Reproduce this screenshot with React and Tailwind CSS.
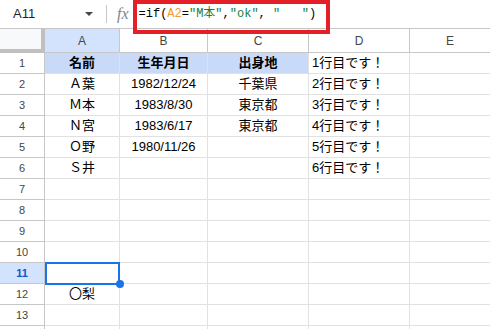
import React from "react";

const FONT = { fontFamily: '"Liberation Sans", Arial, "Noto Sans CJK JP", sans-serif' };

const data = [
  ["名前", "生年月日", "出身地", "1行目です！"],
  ["Ａ葉", "1982/12/24", "千葉県", "2行目です！"],
  ["Ｍ本", "1983/8/30", "東京都", "3行目です！"],
  ["Ｎ宮", "1983/6/17", "東京都", "4行目です！"],
  ["Ｏ野", "1980/11/26", "", "5行目です！"],
  ["Ｓ井", "", "", "6行目です！"],
  ["", "", "", ""],
  ["", "", "", ""],
  ["", "", "", ""],
  ["", "", "", ""],
  ["", "", "", ""],
  ["〇梨", "", "", ""],
  ["", "", "", ""],
  ["", "", "", ""],
];

export default function App() {
  return (
    <div className="relative w-[490px] h-[329px] overflow-hidden bg-white text-black" style={FONT}>
      {/* toolbar */}
      <div className="flex items-center h-[29px] border-b border-[#c7c7c7] bg-white">
        <div className="w-[106px] flex items-center pl-[13px] pr-[13px] justify-between">
          <span className="text-[13px] text-[#1f1f1f]">A11</span>
          <svg width="8" height="4" viewBox="0 0 8 4">
            <path d="M0 0 L8 0 L4 4 Z" fill="#444746" />
          </svg>
        </div>
        <div className="w-px h-[18px] bg-[#c7c7c7]" />
        <span className="ml-[10px] text-[16px] italic text-[#80868b]" style={{ fontFamily: '"Liberation Serif", serif' }}>
          fx
        </span>
        <div className="ml-[10px] text-[12px] whitespace-pre" style={{ fontFamily: '"Liberation Mono", "Noto Sans CJK JP", monospace' }}>
          <span>=if(</span>
          <span className="text-[#f29b30]">A2</span>
          <span>=</span>
          <span className="text-[#188038]">"M本"</span>
          <span>,</span>
          <span className="text-[#188038]">"ok"</span>
          <span>, </span>
          <span className="text-[#188038]">"   "</span>
          <span>)</span>
        </div>
      </div>

      {/* column header row */}
      <div className="flex h-[24px] text-[12px] text-[#444746]">
        <div className="w-[45px] shrink-0 bg-[#f8f9fa] border-r-4 border-b-4 border-[#c0c0c0]" />
        <div className="w-[75px] shrink-0 flex items-center justify-center bg-[#d3e3fd] border-r border-b border-[#c7c7c7]">A</div>
        <div className="w-[88px] shrink-0 flex items-center justify-center border-r border-b border-[#c7c7c7]">B</div>
        <div className="w-[101px] shrink-0 flex items-center justify-center border-r border-b border-[#c7c7c7]">C</div>
        <div className="w-[101px] shrink-0 flex items-center justify-center border-r border-b border-[#c7c7c7]">D</div>
        <div className="flex-1 flex items-center justify-center border-b border-[#c7c7c7]">E</div>
      </div>

      {data.map((row, i) => {
        const n = i + 1;
        const head = n === 1;
        const sel = n === 11;
        return (
          <div key={n} className="flex h-[21px] text-[13px]">
            <div
              className={
                "w-[45px] shrink-0 flex items-center justify-center text-[11px] border-r border-b border-[#c7c7c7] " +
                (sel ? "bg-[#d3e3fd] font-bold text-[#0b57d0]" : "text-[#444746]")
              }
            >
              {n <= 13 ? n : ""}
            </div>
            <div
              className={
                "relative w-[75px] shrink-0 flex items-center justify-center border-r border-b border-[#e1e1e1] " +
                (head ? "bg-[#c9daf8] font-bold" : "")
              }
            >
              {row[0]}
              {sel && (
                <>
                  <div className="absolute left-0 top-[-1px] w-[75px] h-[23px] border-2 border-[#1a73e8] z-10" />
                  <div className="absolute left-[71px] top-[17px] w-[8px] h-[8px] rounded-full bg-[#1a73e8] z-20" />
                </>
              )}
            </div>
            <div
              className={
                "w-[88px] shrink-0 flex items-center justify-center border-r border-b border-[#e1e1e1] " +
                (head ? "bg-[#c9daf8] font-bold" : "")
              }
            >
              {row[1]}
            </div>
            <div
              className={
                "w-[101px] shrink-0 flex items-center justify-center border-r border-b border-[#e1e1e1] " +
                (head ? "bg-[#c9daf8] font-bold" : "")
              }
            >
              {row[2]}
            </div>
            <div className="w-[101px] shrink-0 flex items-center pl-[3px] border-r border-b border-[#e1e1e1]">{row[3]}</div>
            <div className="flex-1 border-b border-[#e1e1e1]" />
          </div>
        );
      })}

      {/* red annotation box */}
      <div className="absolute left-[133px] top-0 w-[197px] h-[34px] border-4 border-[#e32028] z-30" />
    </div>
  );
}
